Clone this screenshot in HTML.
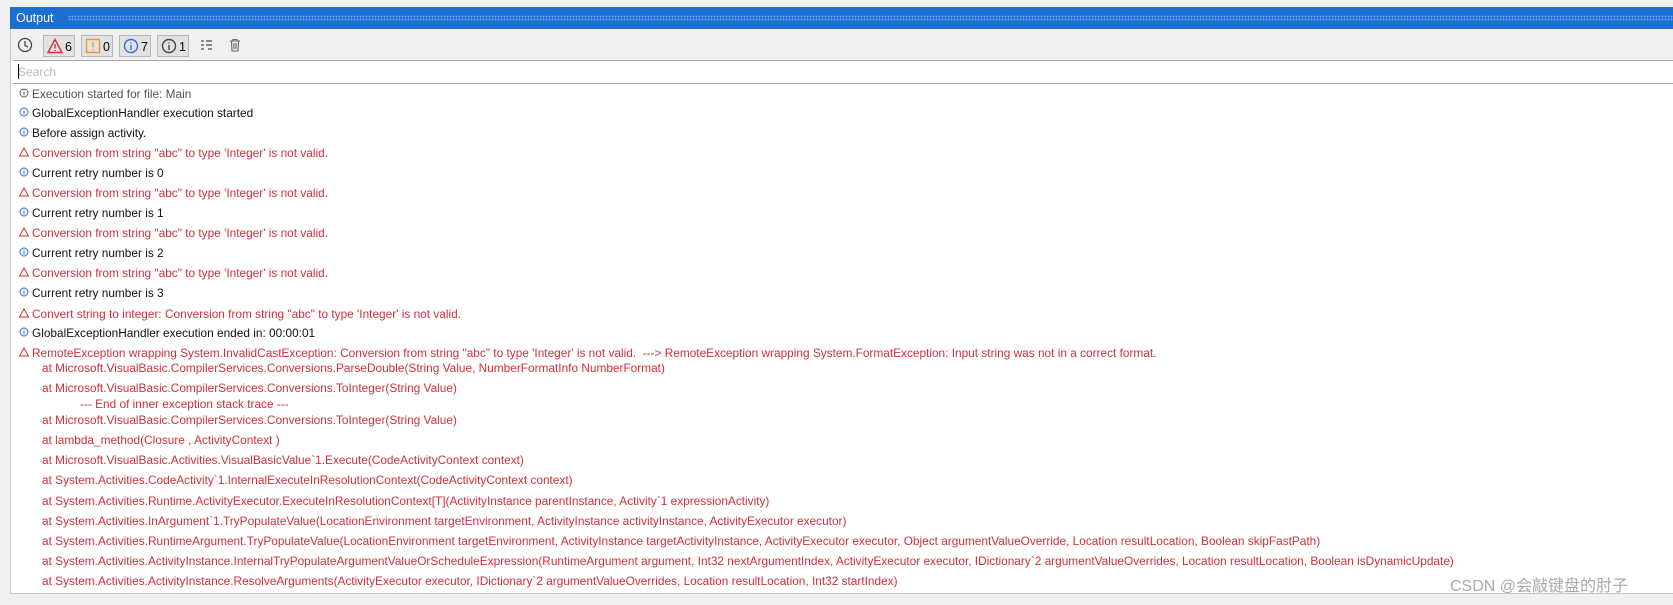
<!DOCTYPE html>
<html><head><meta charset="utf-8"><style>
body{margin:0;width:1673px;height:605px;background:#f0f0f0;position:relative;overflow:hidden;font-family:"Liberation Sans",sans-serif}
.title{position:absolute;left:10px;top:7px;width:1663px;height:22px;background:#1a6fd1;color:#fff;font-size:12.5px;line-height:22px;padding-left:6px;box-sizing:border-box}
.title:after{content:"";position:absolute;left:58px;right:0;top:8px;height:6px;background-image:radial-gradient(circle,#6aa6ec 0.8px,transparent 1px);background-size:3px 3px}
.panel{position:absolute;left:10px;top:29px;width:1663px;height:565px;background:#fff;border-left:1px solid #c8c8c8;border-bottom:1px solid #c8c8c8;box-sizing:border-box}
.tb{position:absolute;left:0;top:0;right:0;height:31px;background:#f0f0f0}
.btn{position:absolute;top:6px;height:22px;border:1px solid #b8b8b8;background:#e2e2e2;font-size:12.5px;line-height:22px;box-sizing:border-box}
.search{position:absolute;left:2px;top:31px;right:0;height:22px;border-top:1px solid #aaa;border-bottom:1px solid #aaa;background:#fff;color:#bbb;font-size:12px;line-height:22px;padding-left:5px}
.search:before{content:"";position:absolute;left:5px;top:3px;width:1px;height:15px;background:#000}
.r{position:absolute;font-size:11.85px;white-space:pre;line-height:14px}
.k{color:#111}.g{color:#555}.e{color:#d0303b}
.ic{position:absolute;left:19px;font-size:9px}
</style></head><body>
<div class="title">Output</div>
<div class="panel">
<div class="tb">
<svg style="position:absolute;left:6px;top:8px" width="16" height="16"><circle cx="8" cy="8" r="6.5" fill="none" stroke="#444" stroke-width="1.3"/><path d="M8 4v4.5l3 1.5" stroke="#444" stroke-width="1.3" fill="none"/></svg>
<div class="btn" style="left:32px;width:32px"><svg style="position:absolute;left:3px;top:2px" width="16" height="16"><path d="M8 1.5L15 14.5H1Z" fill="none" stroke="#d0303b" stroke-width="1.4"/><path d="M8 6v4.5M8 12v1" stroke="#d0303b" stroke-width="1.4"/></svg><span style="position:absolute;left:21px">6</span></div>
<div class="btn" style="left:70px;width:32px"><svg style="position:absolute;left:3px;top:2px" width="16" height="16"><rect x="1.5" y="1.5" width="13" height="13" fill="none" stroke="#f09a20" stroke-width="1.4"/><path d="M8 4v5.5M8 11v1.5" stroke="#f09a20" stroke-width="1.4"/></svg><span style="position:absolute;left:21px">0</span></div>
<div class="btn" style="left:108px;width:32px"><svg style="position:absolute;left:3px;top:2px" width="16" height="16"><circle cx="8" cy="8" r="6.5" fill="none" stroke="#2f6fd6" stroke-width="1.4"/><path d="M8 7v5M8 4.5v1" stroke="#2f6fd6" stroke-width="1.4"/></svg><span style="position:absolute;left:21px">7</span></div>
<div class="btn" style="left:146px;width:32px"><svg style="position:absolute;left:3px;top:2px" width="16" height="16"><circle cx="8" cy="8" r="6.5" fill="none" stroke="#444" stroke-width="1.4"/><path d="M8 7v5M8 4.5v1" stroke="#444" stroke-width="1.4"/></svg><span style="position:absolute;left:21px">1</span></div>
<svg style="position:absolute;left:189px;top:10px" width="14" height="12"><path d="M1 2h3M1 6h3M1 10h3M6 2h6M6 6h6M8 10h4" stroke="#666" stroke-width="1.4"/></svg>
<svg style="position:absolute;left:218px;top:9px" width="12" height="14"><path d="M1 3h10M4 3V1.5h4V3M2.5 3l.5 10h6l.5-10M5 5v6M7 5v6" stroke="#666" stroke-width="1.1" fill="none"/></svg>
</div>
<div class="search">Search</div>
</div>
<div id="L"></div>
<script>
var rows=[
[94,'g','i','Execution started for file: Main'],
[113,'k','b','GlobalExceptionHandler execution started'],
[133,'k','b','Before assign activity.'],
[153,'e','w','Conversion from string "abc" to type \'Integer\' is not valid.'],
[173,'k','b','Current retry number is 0'],
[193,'e','w','Conversion from string "abc" to type \'Integer\' is not valid.'],
[213,'k','b','Current retry number is 1'],
[233,'e','w','Conversion from string "abc" to type \'Integer\' is not valid.'],
[253,'k','b','Current retry number is 2'],
[273,'e','w','Conversion from string "abc" to type \'Integer\' is not valid.'],
[293,'k','b','Current retry number is 3'],
[314,'e','w','Convert string to integer: Conversion from string "abc" to type \'Integer\' is not valid.'],
[333,'k','b','GlobalExceptionHandler execution ended in: 00:00:01'],
[353,'e','w','RemoteException wrapping System.InvalidCastException: Conversion from string "abc" to type \'Integer\' is not valid.  ---> RemoteException wrapping System.FormatException: Input string was not in a correct format.'],
[368,'e','s','at Microsoft.VisualBasic.CompilerServices.Conversions.ParseDouble(String Value, NumberFormatInfo NumberFormat)'],
[388,'e','s','at Microsoft.VisualBasic.CompilerServices.Conversions.ToInteger(String Value)'],
[404,'e','t','--- End of inner exception stack trace ---'],
[420,'e','s','at Microsoft.VisualBasic.CompilerServices.Conversions.ToInteger(String Value)'],
[440,'e','s','at lambda_method(Closure , ActivityContext )'],
[460,'e','s','at Microsoft.VisualBasic.Activities.VisualBasicValue`1.Execute(CodeActivityContext context)'],
[480,'e','s','at System.Activities.CodeActivity`1.InternalExecuteInResolutionContext(CodeActivityContext context)'],
[501,'e','s','at System.Activities.Runtime.ActivityExecutor.ExecuteInResolutionContext[T](ActivityInstance parentInstance, Activity`1 expressionActivity)'],
[521,'e','s','at System.Activities.InArgument`1.TryPopulateValue(LocationEnvironment targetEnvironment, ActivityInstance activityInstance, ActivityExecutor executor)'],
[541,'e','s','at System.Activities.RuntimeArgument.TryPopulateValue(LocationEnvironment targetEnvironment, ActivityInstance targetActivityInstance, ActivityExecutor executor, Object argumentValueOverride, Location resultLocation, Boolean skipFastPath)'],
[561,'e','s','at System.Activities.ActivityInstance.InternalTryPopulateArgumentValueOrScheduleExpression(RuntimeArgument argument, Int32 nextArgumentIndex, ActivityExecutor executor, IDictionary`2 argumentValueOverrides, Location resultLocation, Boolean isDynamicUpdate)'],
[581,'e','s','at System.Activities.ActivityInstance.ResolveArguments(ActivityExecutor executor, IDictionary`2 argumentValueOverrides, Location resultLocation, Int32 startIndex)']];
var h='';
rows.forEach(function(r){
 var x=r[2]=='s'?42:(r[2]=='t'?80:32);
 var t=r[3].replace(/&/g,'&amp;').replace(/</g,'&lt;');
 h+='<div class="r '+r[1]+'" style="left:'+x+'px;top:'+(r[0]-7)+'px">'+t+'</div>';
 if(r[2]=='w')h+='<svg class="ic" style="top:'+(r[0]-6)+'px" width="10" height="10"><path d="M5 1L9.5 9H.5Z" fill="none" stroke="#d0303b" stroke-width="1"/></svg>';
 if(r[2]=='b'||r[2]=='i'){var c=r[2]=='b'?'#3a6fd0':'#555';h+='<svg class="ic" style="top:'+(r[0]-6)+'px" width="10" height="10"><circle cx="5" cy="5" r="4" fill="none" stroke="'+c+'" stroke-width="1"/><path d="M5 4v3.5M5 2.5v.8" stroke="'+c+'" stroke-width="1"/></svg>';}
});
document.getElementById('L').innerHTML=h;
</script>
<div style="position:absolute;left:1450px;top:572px;font-size:16px;color:#aaa;font-family:'Liberation Sans','Noto Sans CJK SC',sans-serif;white-space:nowrap">CSDN @会敲键盘的肘子</div>
</body></html>
